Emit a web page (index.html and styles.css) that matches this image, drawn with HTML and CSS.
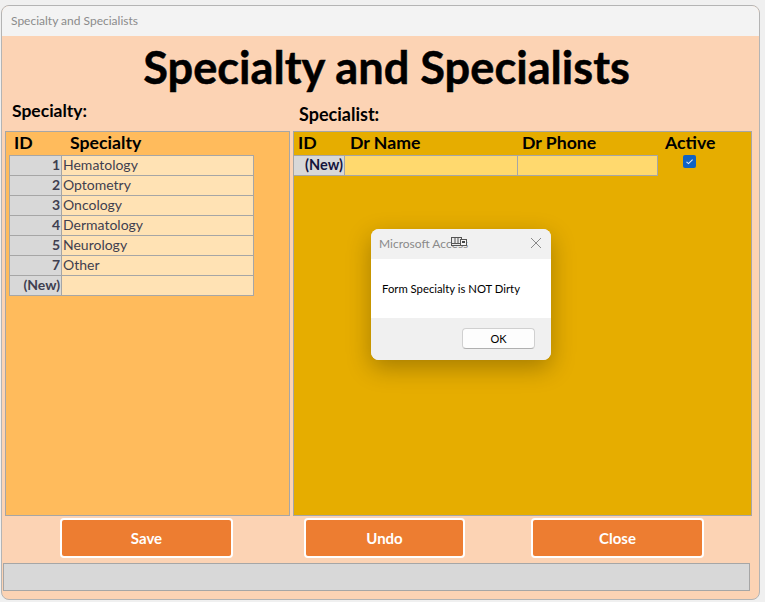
FILE: index.html
```html
<!DOCTYPE html>
<html lang="en">
<head>
<meta charset="utf-8">
<title>Specialty and Specialists</title>
<link rel="stylesheet" href="styles.css">
</head>
<body>
<div class="window">
  <div class="titlebar">Specialty and Specialists</div>
  <div class="form">
    <h1 class="heading">Specialty and Specialists</h1>
    <div class="panels">
      <section class="col col-left">
        <h2 class="label label-left">Specialty:</h2>
        <div class="panel panel-left">
          <div class="heads heads-left"><span class="h-id">ID</span><span class="h-spec">Specialty</span></div>
          <div class="grid grid-left">
            <div class="rn">1</div><div class="cell">Hematology</div>
            <div class="rn">2</div><div class="cell">Optometry</div>
            <div class="rn">3</div><div class="cell">Oncology</div>
            <div class="rn">4</div><div class="cell">Dermatology</div>
            <div class="rn">5</div><div class="cell">Neurology</div>
            <div class="rn">7</div><div class="cell">Other</div>
            <div class="rn new">(New)</div><div class="cell"></div>
          </div>
        </div>
      </section>
      <section class="col col-right">
        <h2 class="label label-right">Specialist:</h2>
        <div class="panel panel-right">
          <div class="heads heads-right"><span class="h-id2">ID</span><span class="h-name">Dr Name</span><span class="h-phone">Dr Phone</span><span class="h-active">Active</span></div>
          <div class="row-right">
            <div class="grid grid-right">
              <div class="rn new dark">(New)</div><div class="cell yellow"></div><div class="cell yellow"></div>
            </div>
            <div class="check-wrap">
              <svg class="check" width="13" height="13" viewBox="0 0 13 13"><rect width="13" height="13" rx="2" fill="#0f62c4"/><path d="M3.5 6.8 5.5 8.6 9.6 4.6" fill="none" stroke="#dfe9f7" stroke-width="1.1"/></svg>
            </div>
          </div>
        </div>
      </section>
    </div>
    <div class="buttons">
      <button class="btn btn-save">Save</button>
      <button class="btn btn-undo">Undo</button>
      <button class="btn btn-close">Close</button>
    </div>
    <div class="status"></div>
  </div>
</div>
<div class="dialog">
  <div class="d-title">
    <span>Microsoft Access</span>
    <svg class="d-x" width="12" height="12" viewBox="0 0 12 12"><path d="M1 1 11 11M11 1 1 11" stroke="#8a8a8a" stroke-width="1" fill="none"/></svg>
    <svg class="d-icon" width="16" height="10" viewBox="0 0 16 10"><rect x="0.5" y="0.5" width="10" height="8" fill="#ececec" stroke="#555"/><path d="M4 1v5M7 1v5M1 6.500h9" stroke="#555" fill="none"/><rect x="9.500" y="2.500" width="6" height="6" fill="#f4f4f4" stroke="#555"/><rect x="11" y="4" width="3" height="2" fill="#444"/></svg>
  </div>
  <div class="d-body">Form Specialty is NOT Dirty</div>
  <div class="d-foot"><button class="d-ok">OK</button></div>
</div>
</body>
</html>
```
FILE: styles.css
```css
* { box-sizing: border-box; }
html, body { margin: 0; padding: 0; }
body {
  width: 765px;
  height: 602px;
  background: #f0f0f0;
  font-family: Lato, "Open Sans", sans-serif;
  position: relative;
  overflow: hidden;
  padding: 5px 5px 2px 1px;
}
.window {
  height: 595px;
  border: 1px solid #b4b4b4;
  border-radius: 8px;
  overflow: hidden;
  display: flex;
  flex-direction: column;
  background: #fcd3b4;
}
.titlebar {
  height: 30px;
  flex: none;
  background: #f3f3f3;
  color: #8b8b8b;
  font-size: 12px;
  padding: 8px 0 0 9px;
  line-height: 14px;
}
.form {
  flex: 1;
  display: flex;
  flex-direction: column;
  min-height: 0;
}
.heading {
  margin: 0;
  height: 60px;
  flex: none;
  text-align: center;
  font-size: 45.2px;
  line-height: 62px;
  font-weight: 700;
  color: #000;
  padding-left: 12px;
  -webkit-text-stroke: 0.5px #000;
}
.panels {
  display: flex;
  gap: 3px;
  padding-left: 3px;
  height: 420px;
  flex: none;
}
.col { display: flex; flex-direction: column; }
.col-left { width: 285px; }
.col-right { width: 459px; }
.label {
  margin: 0;
  height: 35px;
  font-weight: 700;
  color: #000;
  flex: none;
}
.label-left { font-size: 17.5px; padding: 4px 0 0 7px; }
.label-right { font-size: 18px; padding: 7px 0 0 6px; }
.panel {
  flex: 1;
  border: 1px solid #a6a6a6;
}
.panel-left { background: #ffbb5c; padding: 0 0 0 3px; }
.panel-right { background: #e6ad00; }
.heads {
  height: 23px;
  font-size: 17.7px;
  font-weight: 700;
  color: #000;
  line-height: 22px;
  display: flex;
}
.h-id { width: 61px; padding-left: 5px; }
.h-id2 { width: 56px; padding-left: 4px; }
.h-name { width: 172px; }
.h-phone { width: 143px; }
.grid {
  display: grid;
  border-top: 1px solid #a6a6a6;
  border-left: 1px solid #a6a6a6;
}
.grid-left { grid-template-columns: 52px 192px; grid-auto-rows: 20px; width: 245px; }
.grid-right { grid-template-columns: 51px 173px 140px; grid-auto-rows: 20px; border-left: 0; }
.rn, .cell {
  border-right: 1px solid #a6a6a6;
  border-bottom: 1px solid #a6a6a6;
  font-size: 14px;
  line-height: 18px;
  color: #3f3f50;
}
.rn {
  background: #d8d8d8;
  text-align: right;
  font-weight: 700;
  padding-right: 1px;
}
.rn.dark { color: #14143c; font-size: 14.500px; }
.cell { background: #ffe2b4; padding-left: 1px; }
.cell.yellow { background: #ffd96e; }
.row-right { display: flex; }
.check-wrap { padding: 0 0 0 25px; }
.check { display: block; }
.buttons {
  display: flex;
  padding: 2px 0 0 58px;
  height: 42px;
  flex: none;
}
.btn {
  height: 40px;
  background: #ed7d31;
  border: 2px solid #fff;
  border-radius: 4px;
  color: #fff;
  font: 700 15px Lato, "Open Sans", sans-serif;
  padding: 0;
}
.btn-save { width: 173px; margin-right: 71px; }
.btn-undo { width: 161px; margin-right: 66px; }
.btn-close { width: 173px; }
.status {
  margin: 5px 0 0 1px;
  width: 747px;
  height: 28px;
  background: #d8d8d8;
  border: 1px solid #a6a6a6;
  flex: none;
}
.dialog {
  position: absolute;
  left: 371px;
  top: 229px;
  width: 180px;
  height: 131px;
  border-radius: 8px;
  overflow: hidden;
  background: #f0f0f0;
  box-shadow: 0 8px 24px rgba(0, 0, 0, 0.28);
  display: flex;
  flex-direction: column;
}
.d-title {
  height: 30px;
  flex: none;
  position: relative;
  background: #f1f1f1;
  color: #8a8a8a;
  font-size: 12px;
  line-height: 30px;
  padding-left: 8px;
}
.d-x { position: absolute; right: 9px; top: 8px; }
.d-icon { position: absolute; left: 80px; top: 8px; }
.d-body {
  height: 59px;
  flex: none;
  background: #fff;
  color: #000;
  font-size: 11.300px;
  line-height: 59px;
  padding-left: 11px;
}
.d-foot {
  flex: 1;
  background: #f0f0f0;
  display: flex;
  justify-content: flex-end;
  padding: 10px 16px 0 0;
}
.d-ok {
  width: 73px;
  height: 21px;
  background: #fdfdfd;
  border: 1px solid #d0d0d0;
  border-bottom-color: #b0b0b0;
  border-radius: 4px;
  font: 11px Lato, "Open Sans", sans-serif;
  color: #000;
  padding: 0;
}
```
